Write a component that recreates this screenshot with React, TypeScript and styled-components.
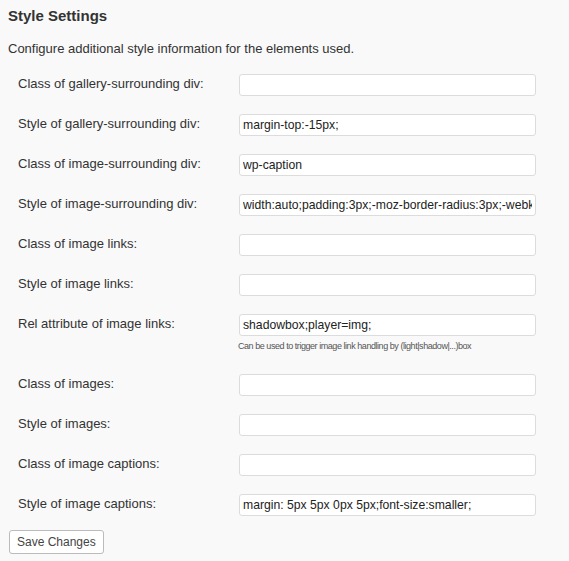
import React from "react";
import styled, { createGlobalStyle } from "styled-components";

const Global = createGlobalStyle`
  html, body { margin: 0; padding: 0; background: #f9f9f9; }
  body { font-family: "Liberation Sans", Arial, sans-serif; color: #333; }
`;

const Page = styled.div`
  width: 569px;
  height: 561px;
  padding: 0 8px;
  box-sizing: border-box;
  background: #f9f9f9;
  overflow: hidden;
`;

const Heading = styled.h3`
  margin: 0;
  padding-top: 7px;
  font-size: 15px;
  line-height: 18px;
  font-weight: bold;
  color: #333;
`;

const Intro = styled.p`
  margin: 15px 0 0;
  font-size: 13px;
  line-height: 17px;
  color: #333;
`;

const Table = styled.div`
  margin-top: 9px;
  display: flex;
  flex-direction: column;
`;

const Row = styled.div`
  display: grid;
  grid-template-columns: 221px 1fr;
  padding: 8px 0 10px;
`;

const Label = styled.label`
  padding: 2px 10px 0;
  font-size: 13px;
  line-height: 16px;
  color: #333;
`;

const Field = styled.div`
  display: flex;
  flex-direction: column;
  padding: 0 10px 0 10px;
`;

const Input = styled.input`
  width: 297px;
  height: 22px;
  box-sizing: border-box;
  border: 1px solid #dcdcdc;
  border-radius: 3px;
  background: #fff;
  padding: 0 3px;
  font-family: "Liberation Sans", Arial, sans-serif;
  font-size: 12.2px;
  color: #222;
  outline: none;
  overflow: hidden;
`;

const Hint = styled.span`
  margin-top: 5px;
  margin-left: -1px;
  font-size: 9px;
  letter-spacing: -0.45px;
  line-height: 11px;
  color: #555;
  padding-bottom: 4px;
`;

const Button = styled.button`
  margin: 4px 0 0 1px;
  height: 24px;
  padding: 0 7px;
  border: 1px solid #bbb;
  border-radius: 3px;
  background: #fff;
  font-family: "Liberation Sans", Arial, sans-serif;
  font-size: 12px;
  color: #444;
  cursor: pointer;
`;

const rows: { label: string; value: string; hint?: string }[] = [
  { label: "Class of gallery-surrounding div:", value: "" },
  { label: "Style of gallery-surrounding div:", value: "margin-top:-15px;" },
  { label: "Class of image-surrounding div:", value: "wp-caption" },
  {
    label: "Style of image-surrounding div:",
    value: "width:auto;padding:3px;-moz-border-radius:3px;-webkit-border-radius:3px;",
  },
  { label: "Class of image links:", value: "" },
  { label: "Style of image links:", value: "" },
  {
    label: "Rel attribute of image links:",
    value: "shadowbox;player=img;",
    hint: "Can be used to trigger image link handling by (light|shadow|...)box",
  },
  { label: "Class of images:", value: "" },
  { label: "Style of images:", value: "" },
  { label: "Class of image captions:", value: "" },
  { label: "Style of image captions:", value: "margin: 5px 5px 0px 5px;font-size:smaller;" },
];

export default function App() {
  return (
    <Page>
      <Global />
      <Heading>Style Settings</Heading>
      <Intro>Configure additional style information for the elements used.</Intro>
      <Table>
        {rows.map((r, i) => (
          <Row key={i}>
            <Label>{r.label}</Label>
            <Field>
              <Input type="text" defaultValue={r.value} />
              {r.hint && <Hint>{r.hint}</Hint>}
            </Field>
          </Row>
        ))}
      </Table>
      <Button>Save Changes</Button>
    </Page>
  );
}
